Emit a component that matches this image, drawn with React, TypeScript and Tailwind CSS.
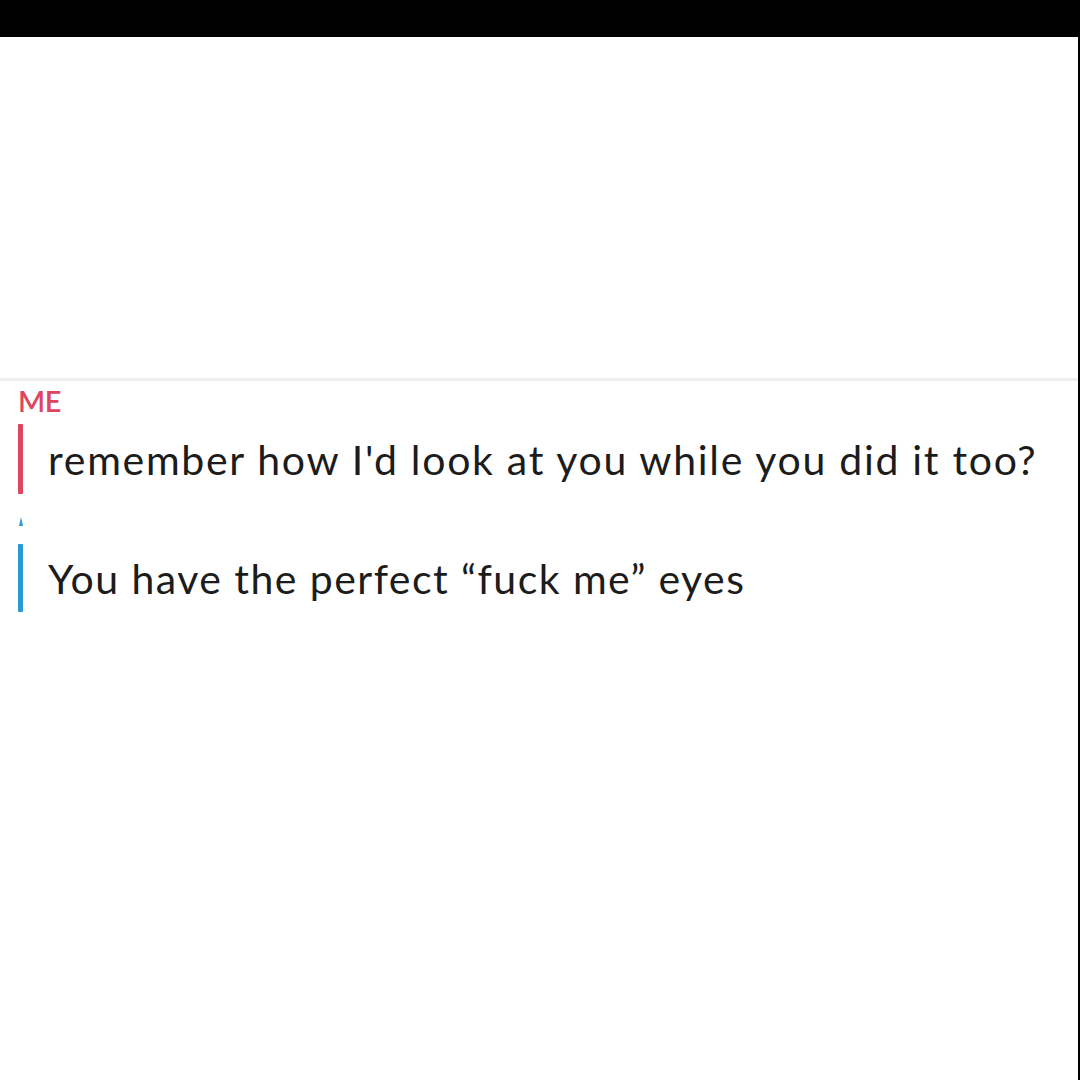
export default function App() {
  return (
    <div className="w-[1080px] h-[1080px] bg-black flex flex-col font-['Lato',sans-serif]">
      <div className="h-[37px] shrink-0 bg-black" />
      <div className="flex-1 flex">
        <div className="w-[1078px] bg-white flex flex-col">
          <div className="h-[341px] shrink-0" />
          <div className="h-[3px] bg-[#eeeeee]" />
          <div className="pl-[18px] pt-[7px] text-[#de4561] text-[29px] font-semibold leading-[26px] tracking-[-0.5px]">ME</div>
          <div className="flex items-center mt-[10px] h-[70px]">
            <div className="ml-[18px] w-[5px] h-[70px] bg-[#de4561] rounded-[1px]" />
            <div className="ml-[25px] text-[41px] tracking-[1.7px] text-[#1c1c1c] leading-none">remember how I'd look at you while you did it too?</div>
          </div>
          <div className="relative h-[50px]">
            <div className="absolute left-[19px] top-[23px] w-0 h-0 border-l-[2px] border-r-[2px] border-b-[9px] border-l-transparent border-r-transparent border-b-[#2a9ad6]" />
          </div>
          <div className="flex items-center h-[68px]">
            <div className="ml-[18px] w-[5px] h-[68px] bg-[#2a9ad6] rounded-[1px]" />
            <div className="ml-[25px] text-[41px] tracking-[1.45px] text-[#1c1c1c] leading-none">You have the perfect “fuck me” eyes</div>
          </div>
        </div>
        <div className="w-[2px] bg-black" />
      </div>
    </div>
  );
}
